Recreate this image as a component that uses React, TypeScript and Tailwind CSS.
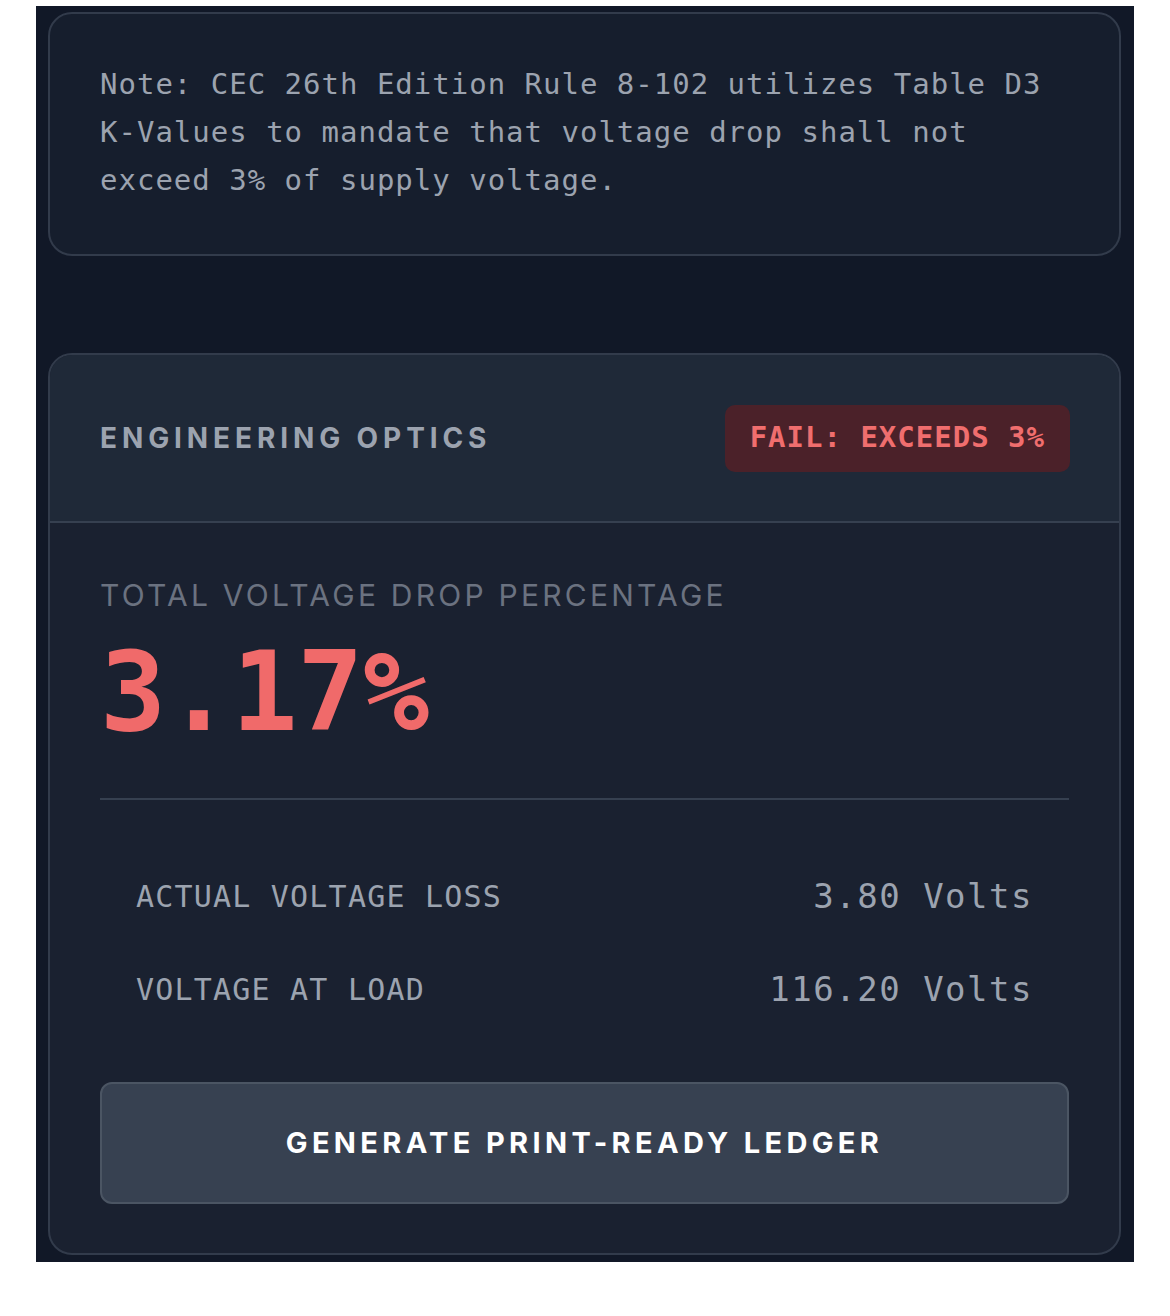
import React from "react";

export default function App() {
  return (
    <div className="min-h-[1316px] w-[1170px] bg-white pl-[36px] pt-[6px]">
      <div className="flex w-[1098px] flex-col bg-[#111827] pl-[12px] pr-[13px] pt-[6px] pb-[7px]">
        {/* Note card */}
        <div className="rounded-[24px] border-2 border-[#323b4b] bg-[#161e2d] px-[50px] pt-[46px] pb-[50px]">
          <p className="font-['DejaVu_Sans_Mono',monospace] text-[29px] leading-[48px] tracking-[1px] text-[#9ca3af]">
            Note: CEC 26th Edition Rule 8-102 utilizes Table D3 K-Values to mandate that voltage drop shall not exceed 3% of supply voltage.
          </p>
        </div>

        {/* Results card */}
        <div className="mt-[97px] overflow-hidden rounded-[24px] border-2 border-[#323b4b] bg-[#1a2130]">
          <div className="flex h-[168px] items-center justify-between border-b-2 border-[#364050] bg-[#1f2938] pl-[50px] pr-[49px]">
            <h2 className="font-['Inter',sans-serif] text-[28px] font-bold tracking-[0.175em] text-[#9ca3af]">
              ENGINEERING OPTICS
            </h2>
            <span className="flex h-[67px] items-center rounded-[10px] bg-[#4b2129] px-[25px] font-['DejaVu_Sans_Mono',monospace] text-[29px] font-bold tracking-[1px] text-[#f06e6e]">
              FAIL: EXCEEDS 3%
            </span>
          </div>

          <div className="px-[50px] pt-[52px] pb-[49px]">
            <div className="font-['Inter',sans-serif] text-[30px] leading-[40px] tracking-[0.108em] text-[#6b7280]">
              TOTAL VOLTAGE DROP PERCENTAGE
            </div>
            <div className="mt-[22px] font-['DejaVu_Sans_Mono',monospace] text-[110px] font-bold leading-[110px] tracking-[-0.5px] text-[#f06a6a]">
              3.17%
            </div>
            <div className="mt-[51px] h-[2px] bg-[#364050]" />

            <div className="flex flex-col px-[36px] pt-[70px]">
              <div className="flex h-[52px] items-center justify-between">
                <span className="font-['DejaVu_Sans_Mono',monospace] text-[30px] tracking-[1.2px] text-[#9ca3af]">
                  ACTUAL VOLTAGE LOSS
                </span>
                <span className="font-['DejaVu_Sans_Mono',monospace] text-[34px] tracking-[1.5px] text-[#9ca3af]">
                  3.80 Volts
                </span>
              </div>
              <div className="mt-[41px] flex h-[52px] items-center justify-between">
                <span className="font-['DejaVu_Sans_Mono',monospace] text-[30px] tracking-[1.2px] text-[#9ca3af]">
                  VOLTAGE AT LOAD
                </span>
                <span className="font-['DejaVu_Sans_Mono',monospace] text-[34px] tracking-[1.5px] text-[#9ca3af]">
                  116.20 Volts
                </span>
              </div>
            </div>

            <button className="mt-[67px] flex h-[122px] w-full items-center justify-center rounded-[12px] border-2 border-[#4b5563] bg-[#374151] font-['Inter',sans-serif] text-[29px] font-bold tracking-[0.15em] text-white">
              GENERATE PRINT-READY LEDGER
            </button>
          </div>
        </div>
      </div>
    </div>
  );
}
